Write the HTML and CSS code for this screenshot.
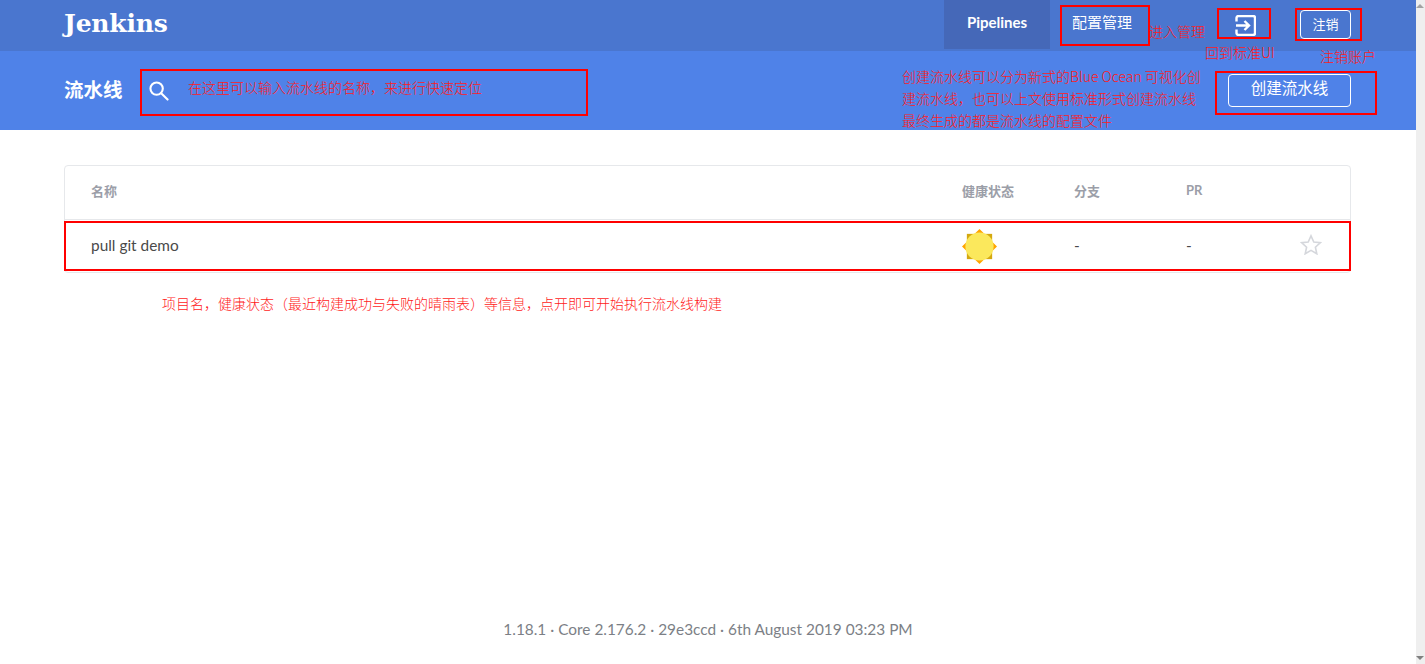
FILE: index.html
```html
<!DOCTYPE html>
<html lang="zh-CN">
<head>
<meta charset="UTF-8">
<meta name="viewport" content="width=device-width, initial-scale=1.0">
<title>Jenkins Blue Ocean</title>
<link rel="stylesheet" href="styles.css">
</head>
<body>
<div class="page">
  <header class="topbar">
    <div class="logo">Jenkins</div>
    <nav class="nav">
      <a class="nav-tab active">Pipelines</a>
      <a class="nav-tab admin">配置管理</a>
      <a class="nav-exit" title="回到标准UI">
        <svg width="21" height="21" viewBox="0 0 21 21" fill="none" stroke="#fff" stroke-width="2.4">
          <path d="M1.5 6.5V3a2 2 0 0 1 2-2h14.5a2 2 0 0 1 2 2v15a2 2 0 0 1-2 2H3.5a2 2 0 0 1-2-2v-3.5"/>
          <path d="M1 10.5h12.5M9.5 6l4.5 4.5-4.5 4.5"/>
        </svg>
      </a>
      <a class="btn-logout">注销</a>
    </nav>
  </header>
  <section class="subbar">
    <h1 class="subbar-title">流水线</h1>
    <svg class="search-icon" width="20" height="20" viewBox="0 0 21 21" fill="none" stroke="#fff" stroke-width="2.2">
      <circle cx="8" cy="8" r="6.5"/>
      <path d="M12.8 12.8L19.5 19.5" stroke-linecap="round"/>
    </svg>
    <a class="btn-create">创建流水线</a>
  </section>
  <main class="content">
    <div class="table">
      <div class="table-row table-head">
        <div>名称</div>
        <div>健康状态</div>
        <div>分支</div>
        <div>PR</div>
        <div></div>
      </div>
      <div class="table-row table-item">
        <div>pull git demo</div>
        <div class="weather">
          <svg width="35" height="35" viewBox="0 0 36 36">
            <path d="M18 0l5 5h-10zM18 36l-5-5h10zM0 18l5-5v10zM36 18l-5 5v-10z" fill="#ffa500"/>
            <rect x="5" y="5" width="26" height="26" fill="#d4a80f"/>
            <circle cx="18" cy="18" r="14.5" fill="#fbe85c"/>
          </svg>
        </div>
        <div>-</div>
        <div>-</div>
        <div class="star">
          <svg width="22" height="21" viewBox="0 0 22 21" fill="none" stroke="#d5d7dc" stroke-width="1.6">
            <path d="M11 1.8l2.8 6.2 6.6.7-5 4.5 1.4 6.6L11 16.4l-5.8 3.4 1.4-6.6-5-4.5 6.6-.7z"/>
          </svg>
        </div>
      </div>
    </div>
  </main>
  <footer class="footer">1.18.1 · Core 2.176.2 · 29e3ccd · 6th August 2019 03:23 PM</footer>

  <!-- red notes drawn on top of the screenshot -->
  <div class="mark mark-search"></div>
  <div class="mark mark-admin"></div>
  <div class="mark mark-exit"></div>
  <div class="mark mark-logout"></div>
  <div class="mark mark-create"></div>
  <div class="mark mark-row"></div>
  <div class="note note-search">在这里可以输入流水线的名称，来进行快速定位</div>
  <div class="note note-admin">进入管理</div>
  <div class="note note-exit">回到标准UI</div>
  <div class="note note-logout">注销账户</div>
  <div class="note note-create">创建流水线可以分为新式的Blue Ocean 可视化创<br>建流水线，也可以上文使用标准形式创建流水线<br>最终生成的都是流水线的配置文件</div>
  <div class="note note-row">项目名，健康状态（最近构建成功与失败的晴雨表）等信息，点开即可开始执行流水线构建</div>
</div>
<div class="scrollbar">
  <span class="arrow-up"></span>
  <span class="arrow-down"></span>
</div>
</body>
</html>
```

FILE: styles.css
```css
html, body {
  height: 100%;
  margin: 0;
  overflow: hidden;
}

body {
  display: flex;
  font-family: Lato, "Noto Sans CJK SC", sans-serif;
  background-color: #ffffff;
  color: #4a4a4a;
}

.page {
  position: relative;
  flex: 1;
  display: flex;
  flex-direction: column;
  min-width: 0;
}

.topbar {
  display: flex;
  justify-content: space-between;
  height: 51px;
  padding: 0 65px 0 64px;
  background-color: #4a76cf;
  color: #fff;
}

.logo {
  font-family: "DejaVu Serif", serif;
  font-size: 25px;
  font-weight: bold;
  letter-spacing: -0.2px;
  line-height: 48px;
}

.nav {
  display: flex;
  align-items: flex-start;
}

.nav-tab {
  height: 49px;
  font-size: 15px;
  line-height: 45px;
  font-weight: bold;
  text-align: center;
}

.nav-tab.active {
  width: 106px;
  background-color: #4568b8;
}

.nav-tab.admin {
  width: 106px;
  margin-left: 6px;
  font-size: 15px;
  font-weight: normal;
  line-height: 44px;
  text-align: left;
  text-indent: 16px;
}

.nav-exit {
  display: flex;
  margin: 15px 0 0 73px;
}

.btn-logout {
  width: 49px;
  height: 27px;
  margin: 10px 0 0 44px;
  border: 1px solid #fff;
  border-radius: 4px;
  font-size: 13px;
  line-height: 27px;
  text-align: center;
}

.subbar {
  display: flex;
  align-items: center;
  height: 79px;
  padding: 0 65px 0 64px;
  background-color: #4f82e8;
  color: #fff;
}

.subbar-title {
  margin: 0 0 4px;
  font-size: 19.5px;
  font-weight: bold;
}

.search-icon {
  margin-left: 26px;
}

.btn-create {
  width: 121px;
  height: 31px;
  margin-left: auto;
  border: 1px solid #fff;
  border-radius: 4px;
  font-size: 15.5px;
  line-height: 27px;
  text-align: center;
}

.content {
  flex: 1;
  padding: 35px 65px 0 64px;
}

.table {
  border: 1px solid #e6e8eb;
  border-radius: 4px;
}

.table-row {
  display: grid;
  grid-template-columns: 871px 112px 112px 100px 1fr;
  align-items: center;
  padding-left: 26px;
}

.table-head {
  height: 48px;
  padding-bottom: 5px;
  border-bottom: 1px solid #e6e8eb;
  font-size: 13px;
  font-weight: bold;
  color: #9b9ea8;
}

.table-item {
  height: 50px;
  padding-bottom: 2px;
  font-size: 15.4px;
  color: #4a4a4a;
}

.weather svg {
  display: block;
  margin-top: 2px;
}

.star svg {
  display: block;
  margin: 0 0 2px 14px;
}

.footer {
  height: 44px;
  font-size: 15.4px;
  text-align: center;
  color: #7c7f86;
}

.scrollbar {
  position: relative;
  width: 9px;
  background-color: #efefef;
}

.arrow-up,
.arrow-down {
  position: absolute;
  left: 0;
  border-left: 4px solid transparent;
  border-right: 4px solid transparent;
}

.arrow-up {
  top: 4px;
  border-bottom: 4px solid #a3a3a3;
}

.arrow-down {
  bottom: 4px;
  border-top: 4px solid #808080;
}

/* annotations painted over the page */
.mark {
  position: absolute;
  border: 2px solid #f00;
  box-sizing: border-box;
}

.mark-search { left: 140px; top: 69px; width: 448px; height: 47px; }
.mark-admin { left: 1060px; top: 5px; width: 90px; height: 41px; }
.mark-exit { left: 1217px; top: 8px; width: 54px; height: 31px; }
.mark-logout { left: 1295px; top: 8px; width: 67px; height: 33px; }
.mark-create { left: 1215px; top: 71px; width: 162px; height: 44px; }
.mark-row { left: 64px; top: 221px; width: 1287px; height: 50px; }

.note {
  position: absolute;
  font-family: "Noto Sans CJK SC", sans-serif;
  font-size: 14px;
  font-weight: 300;
  line-height: 18px;
  color: #ff1a1a;
  white-space: nowrap;
}

.note-search { left: 188px; top: 78px; }
.note-admin { left: 1149px; top: 22px; }
.note-exit { left: 1205px; top: 43px; }
.note-logout { left: 1320px; top: 47px; }
.note-create { left: 902px; top: 65px; line-height: 22px; }
.note-row { left: 162px; top: 294px; }
```
